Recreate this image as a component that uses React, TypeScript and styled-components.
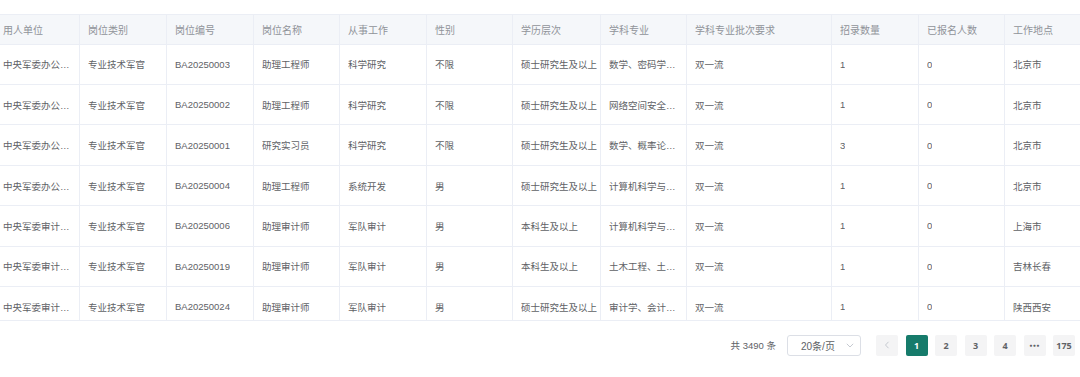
import React from "react";
import styled, { createGlobalStyle } from "styled-components";

const GlobalStyle = createGlobalStyle`
  html, body { margin: 0; padding: 0; background: #fff; overflow: hidden; }
  body { font-family: "Liberation Sans", "Noto Sans CJK SC", sans-serif; }
  * { box-sizing: border-box; }
`;

const COLS = "80px 87px 87px 86px 87px 86px 88px 86px 145px 87px 86px 75px";

const Page = styled.div`
  width: 1080px;
  height: 377px;
  padding-top: 14px;
  display: flex;
  flex-direction: column;
`;

const Table = styled.div`
  display: flex;
  flex-direction: column;
  border-top: 1px solid #ebeef5;
`;

const Row = styled.div<{ $head?: boolean }>`
  display: grid;
  grid-template-columns: ${COLS};
  height: ${(p) => (p.$head ? "29.5px" : "40.45px")};
  flex: none;
  background: ${(p) => (p.$head ? "#f5f7fa" : "#fff")};
  border-bottom: 1px solid #ebeef5;
`;

const Body = styled.div`
  height: 276px;
  overflow: hidden;
  border-bottom: 1px solid #ebeef5;
  display: flex;
  flex-direction: column;
`;

const Cell = styled.div<{ $head?: boolean; $first?: boolean; $last?: boolean; $free?: boolean }>`
  display: flex;
  align-items: center;
  padding: 0 ${(p) => (p.$free ? "2px" : "8px")} 0 ${(p) => (p.$first ? "3px" : "8px")};
  border-right: ${(p) => (p.$last ? "none" : "1px solid #ebeef5")};
  font-size: ${(p) => (p.$head ? "10px" : "9.5px")};
  color: ${(p) => (p.$head ? "#909399" : "#606266")};
  white-space: nowrap;
  overflow: hidden;
  min-width: 0;
`;

const Text = styled.span`
  overflow: hidden;
  text-overflow: ellipsis;
  white-space: nowrap;
  min-width: 0;
`;

const Footer = styled.div`
  display: flex;
  align-items: center;
  justify-content: flex-end;
  padding: 14px 5px 0 0;
`;

const Total = styled.span`
  font-size: 9.5px;
  color: #606266;
  margin-right: 11px;
`;

const Select = styled.div`
  width: 74px;
  height: 21px;
  border: 1px solid #dcdfe6;
  border-radius: 3px;
  display: flex;
  align-items: center;
  justify-content: space-between;
  padding: 0 6px 0 13px;
  font-size: 10px;
  color: #606266;
  margin-right: 15px;
`;

const Pager = styled.div`
  display: flex;
  gap: 7.5px;
`;

const PageBtn = styled.div<{ $active?: boolean }>`
  width: 22px;
  height: 21px;
  border-radius: 2px;
  display: flex;
  align-items: center;
  justify-content: center;
  font-family: "Open Sans", "Noto Sans", sans-serif;
  font-weight: 700;
  font-size: 9px;
  background: ${(p) => (p.$active ? "#167b6b" : "#f4f4f5")};
  color: ${(p) => (p.$active ? "#fff" : "#606266")};
`;

const Dots = styled.span`
  font-size: 5px;
  letter-spacing: 0.5px;
`;

const headers = [
  "用人单位", "岗位类别", "岗位编号", "岗位名称", "从事工作", "性别",
  "学历层次", "学科专业", "学科专业批次要求", "招录数量", "已报名人数", "工作地点",
];

const rows = [
  ["中央军委办公厅机要局", "专业技术军官", "BA20250003", "助理工程师", "科学研究", "不限", "硕士研究生及以上", "数学、密码学、统计学", "双一流", "1", "0", "北京市"],
  ["中央军委办公厅机要局", "专业技术军官", "BA20250002", "助理工程师", "科学研究", "不限", "硕士研究生及以上", "网络空间安全、计算机科学与技术", "双一流", "1", "0", "北京市"],
  ["中央军委办公厅机要局", "专业技术军官", "BA20250001", "研究实习员", "科学研究", "不限", "硕士研究生及以上", "数学、概率论与数理统计", "双一流", "3", "0", "北京市"],
  ["中央军委办公厅机要局", "专业技术军官", "BA20250004", "助理工程师", "系统开发", "男", "硕士研究生及以上", "计算机科学与技术", "双一流", "1", "0", "北京市"],
  ["中央军委审计署上海审计中心", "专业技术军官", "BA20250006", "助理审计师", "军队审计", "男", "本科生及以上", "计算机科学与技术", "双一流", "1", "0", "上海市"],
  ["中央军委审计署长春审计中心", "专业技术军官", "BA20250019", "助理审计师", "军队审计", "男", "本科生及以上", "土木工程、土地资源管理", "双一流", "1", "0", "吉林长春"],
  ["中央军委审计署西安审计中心", "专业技术军官", "BA20250024", "助理审计师", "军队审计", "男", "硕士研究生及以上", "审计学、会计学、财务管理", "双一流", "1", "0", "陕西西安"],
];

const Chevron = ({ dir, color }: { dir: "left" | "down"; color: string }) =>
  dir === "left" ? (
    <svg width="6" height="8" viewBox="0 0 6 8">
      <path d="M4.5 0.8 L1.5 4 L4.5 7.2" fill="none" stroke={color} strokeWidth="0.9" />
    </svg>
  ) : (
    <svg width="8" height="5" viewBox="0 0 8 5">
      <path d="M0.8 0.8 L4 4 L7.2 0.8" fill="none" stroke={color} strokeWidth="0.9" />
    </svg>
  );

export default function App() {
  return (
    <Page>
      <GlobalStyle />
      <Table>
        <Row $head>
          {headers.map((h, i) => (
            <Cell key={h} $head $first={i === 0} $last={i === headers.length - 1}>
              <Text>{h}</Text>
            </Cell>
          ))}
        </Row>
        <Body>
          {rows.map((r, ri) => (
            <Row key={ri}>
              {r.map((c, i) => (
                <Cell key={i} $first={i === 0} $last={i === r.length - 1} $free={i === 6}>
                  <Text>{c}</Text>
                </Cell>
              ))}
            </Row>
          ))}
        </Body>
      </Table>
      <Footer>
        <Total>共 3490 条</Total>
        <Select>
          <span>20条/页</span>
          <Chevron dir="down" color="#c0c4cc" />
        </Select>
        <Pager>
          <PageBtn>
            <Chevron dir="left" color="#c0c4cc" />
          </PageBtn>
          <PageBtn $active>1</PageBtn>
          <PageBtn>2</PageBtn>
          <PageBtn>3</PageBtn>
          <PageBtn>4</PageBtn>
          <PageBtn>
            <Dots>●●●</Dots>
          </PageBtn>
          <PageBtn>175</PageBtn>
        </Pager>
      </Footer>
    </Page>
  );
}
